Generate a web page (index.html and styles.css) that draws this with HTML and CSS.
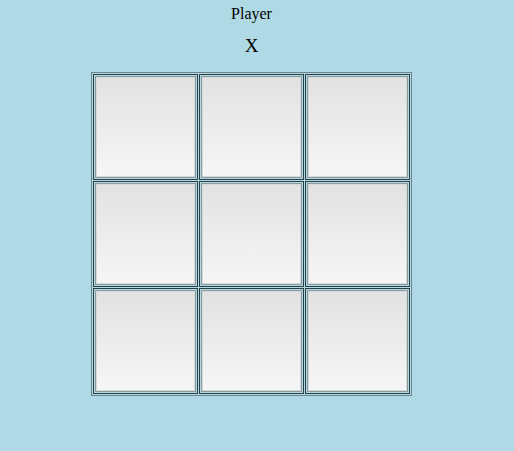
FILE: index.html
```html
<!DOCTYPE html>
<html lang="en">
<head>
    <meta charset="UTF-8">
    <title>Tic Tac Toe</title>
    <link rel="stylesheet" href="styles.css">
</head>
<body>
    <div class="game">
        <div class="label">Player</div>
        <div class="turn">X</div>
        <table class="board">
            <tr>
                <td><button class="cell"></button></td>
                <td><button class="cell"></button></td>
                <td><button class="cell"></button></td>
            </tr>
            <tr>
                <td><button class="cell"></button></td>
                <td><button class="cell"></button></td>
                <td><button class="cell"></button></td>
            </tr>
            <tr>
                <td><button class="cell"></button></td>
                <td><button class="cell"></button></td>
                <td><button class="cell"></button></td>
            </tr>
        </table>
    </div>
</body>
</html>
```

FILE: styles.css
```css
* {
    margin: 0;
    padding: 0;
}

body {
    background: #b0d9e6;
    font-family: "Liberation Serif", "Times New Roman", serif;
    color: #000;
}

.game {
    width: 503px;
    padding-top: 5px;
    text-align: center;
}

.label {
    font-size: 16px;
    line-height: 18px;
}

.turn {
    margin-top: 12px;
    font-size: 19px;
    line-height: 22px;
}

.board {
    margin: 15px auto 0;
    border: 1px solid #6f8489;
    border-spacing: 1px;
}

.board td {
    border: 1px solid #2b3f45;
    padding: 1px;
}

.cell {
    display: block;
    width: 101px;
    height: 102px;
    border: 1px solid #8d9a9d;
    box-shadow: inset 0 0 0 1px #d4dadb;
    background: linear-gradient(#e2e2e2, #f6f6f6);
    cursor: pointer;
}
```
